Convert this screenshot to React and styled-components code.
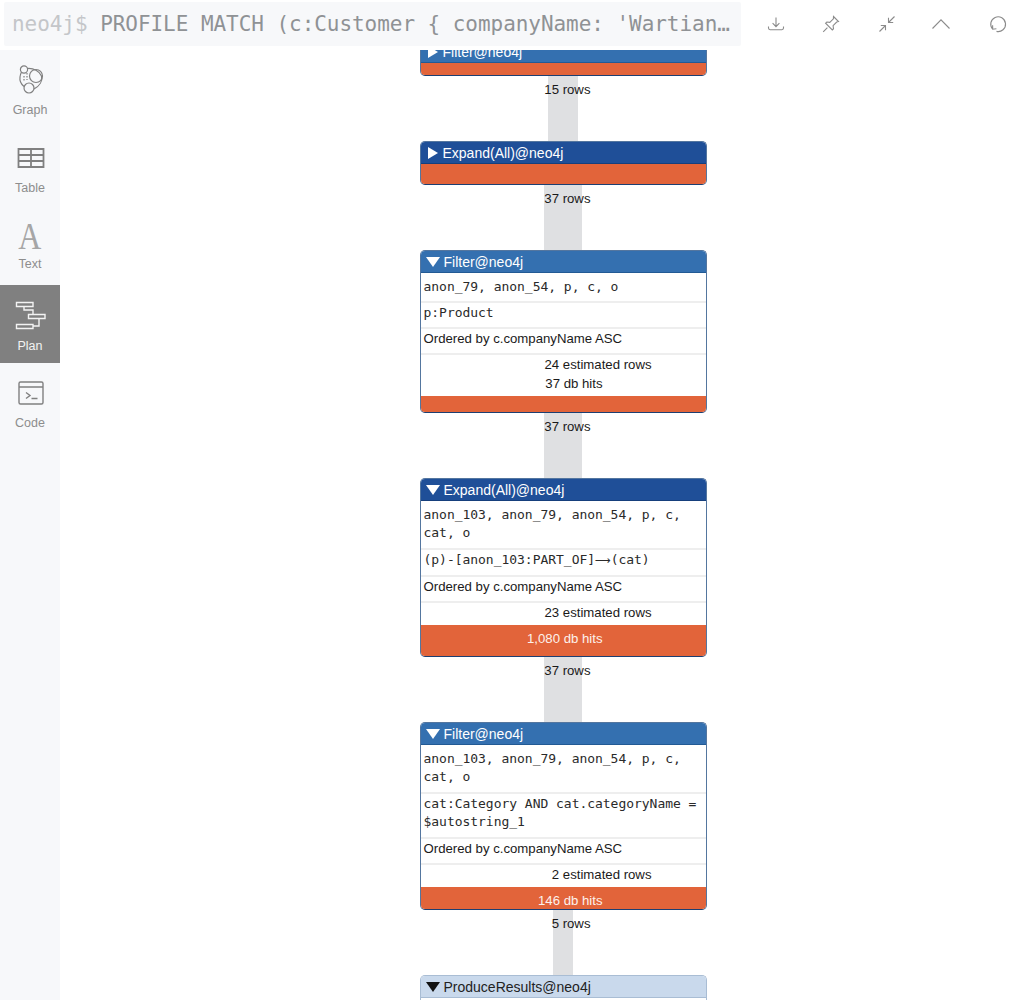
import React from 'react';
import styled, {createGlobalStyle} from 'styled-components';

const GlobalStyle = createGlobalStyle`
  html, body {
    margin: 0;
    padding: 0;
    height: 100%;
    background: #fff;
    overflow: hidden;
  }
  #root {
    height: 100%;
  }
`;

const Page = styled.div`
  display: flex;
  flex-direction: column;
  height: 1000px;
  font-family: "Liberation Sans", Arial, sans-serif;
`;

const TopBar = styled.div`
  display: flex;
  height: 50px;
  flex-shrink: 0;
  padding: 2px 0 4px 4px;
  box-sizing: border-box;
`;

const Editor = styled.div`
  width: 737px;
  flex-shrink: 0;
  box-sizing: border-box;
  padding-left: 8px;
  background: #f7f8fa;
  border-radius: 2px;
  font-family: "DejaVu Sans Mono", "Liberation Mono", monospace;
  font-size: 21px;
  line-height: 44px;
  letter-spacing: -0.05px;
  color: #8f9295;
  white-space: nowrap;
`;

const Prompt = styled.span`
  color: #c4c6c9;
`;

const Toolbar = styled.div`
  display: flex;
  flex: 1;
  padding-left: 7px;
  align-items: center;
`;

const ToolButton = styled.div`
  width: 55.4px;
  height: 40px;
  display: flex;
  align-items: center;
  justify-content: center;
`;

const ToolIcon = styled.svg`
  width: 20px;
  height: 20px;
  fill: none;
  stroke: #8b8b8b;
  stroke-width: 1.1;
`;

const Main = styled.div`
  display: flex;
  flex: 1;
  min-height: 0;
`;

const Sidebar = styled.div`
  width: 60px;
  flex-shrink: 0;
  background: #f7f8fa;
`;

const SideItem = styled.div`
  height: 78.2px;
  display: flex;
  flex-direction: column;
  align-items: center;
  box-sizing: border-box;
  padding-top: ${props => props.active ? '12px' : '14px'};
  background: ${props => props.active ? '#808080' : 'transparent'};
  color: ${props => props.active ? '#f3f3f3' : '#8d8d8d'};
`;

const SideIcon = styled.svg`
  width: 34px;
  height: 34px;
  fill: none;
  stroke: ${props => props.active ? '#f3f3f3' : '#808080'};
  stroke-width: 1.2;
`;

const SideGlyph = styled.div`
  height: 34px;
  font-family: "Liberation Serif", serif;
  font-size: 38px;
  line-height: 32px;
  color: #a6a6a6;
  transform: scaleX(0.84);
`;

const SideLabel = styled.div`
  margin-top: ${props => props.gap || 4}px;
  font-size: 12.5px;
  line-height: 16px;
`;

const Canvas = styled.div`
  flex: 1;
  overflow: hidden;
  padding-left: 359.5px;
`;

const Plan = styled.div`
  width: 287px;
  margin-top: -10px;
`;

const Node = styled.div`
  box-sizing: border-box;
  border: 1px solid ${props => props.side};
  border-bottom-color: ${props => props.bottom};
  border-radius: 5px;
  overflow: hidden;
  background: #fff;
  font-size: 13.2px;
  color: #1a1a1a;
`;

const NodeHeader = styled.div`
  display: flex;
  align-items: center;
  height: 21px;
  margin: -1px -1px 0;
  padding: 1px 0 0 6px;
  background: ${props => props.bg};
  border-bottom: 1px solid ${props => props.border};
  color: ${props => props.dark ? '#222' : '#fff'};
  font-size: 14px;
`;

const Triangle = styled.span`
  width: 0;
  height: 0;
  margin: ${props => props.open ? '0 4px 0 0' : '0 5px 0 2px'};
  ${props => props.open ? `
    border-left: 7px solid transparent;
    border-right: 7px solid transparent;
    border-top: 10px solid ${props.color};
  ` : `
    border-top: 6px solid transparent;
    border-bottom: 6px solid transparent;
    border-left: 10px solid ${props.color};
  `}
`;

const Row = styled.div`
  padding: 1px 3px ${props => props.wrapped ? 6 : 5}px;
  line-height: 18px;
  border-top: 2px solid #eeeeee;
`;

const FirstRow = styled(Row)`
  padding-top: 5px;
  border-top: 0;
`;

const Mono = styled.span`
  font-family: "DejaVu Sans Mono", "Liberation Mono", monospace;
  font-size: 13px;
  letter-spacing: -0.03px;
  color: #2a2a2a;
`;

const LongArrow = styled.span`
  display: inline-block;
  width: 15.6px;
  text-align: center;
  font-family: "DejaVu Sans", sans-serif;
  font-size: 11px;
`;

const Stats = styled.div`
  border-top: 2px solid #eeeeee;
  padding-bottom: 3px;
  text-align: right;
  line-height: 19px;
`;

const EstRows = styled.div`
  padding-right: 54px;
`;

const Hits = styled.div`
  padding-right: 103px;
`;

const OrangeBar = styled.div`
  height: ${props => props.height}px;
  box-sizing: border-box;
  padding: ${props => props.pad || 0}px 103px 0 0;
  background: #e2643a;
  color: #fdf1ec;
  text-align: right;
  line-height: 18px;
`;

const Wire = styled.div`
  position: relative;
  display: flex;
  justify-content: center;
  height: 65px;
`;

const WireBar = styled.div`
  width: ${props => props.width}px;
  background: #dfe0e2;
`;

const WireLabel = styled.div`
  position: absolute;
  top: 6px;
  right: 116px;
  font-size: 13.2px;
  line-height: 16px;
  color: #1a1a1a;
`;

const PlanNode = ({title, bg, border, side, open, dark, children}) => (
  <Node side={side} bottom={dark ? '#9fb3cb' : '#1c3f72'}>
    <NodeHeader bg={bg} border={border} dark={dark}>
      <Triangle open={open} color={dark ? '#111' : '#fff'}/>
      {title}
    </NodeHeader>
    {children}
  </Node>
);

const Edge = ({rows, width}) => (
  <Wire>
    <WireBar width={width}/>
    <WireLabel>{rows} rows</WireLabel>
  </Wire>
);

const FILTER = {bg: '#3470b0', border: '#225a94', side: '#54769f'};
const EXPAND = {bg: '#1f4f98', border: '#163f7c', side: '#54769f'};

const App = () => {
  return (
    <Page>
      <GlobalStyle/>
      <TopBar>
        <Editor>
          <Prompt>neo4j$ </Prompt>PROFILE MATCH (c:Customer {'{'} companyName: 'Wartian…
        </Editor>
        <Toolbar>
          <ToolButton>
            <ToolIcon viewBox="0 0 20 20">
              <path d="M10 3.500v9M6.600 9.200l3.400 3.400 3.400-3.400M2.500 12.500v1.600c0 1 .8 1.600 1.600 1.600h11.800c.8 0 1.600-.6 1.600-1.600v-1.600"/>
            </ToolIcon>
          </ToolButton>
          <ToolButton>
            <ToolIcon viewBox="0 0 20 20">
              <path d="M12.500 2.500l5 5-1.800.6-3.600 3.600.4 3-1.200 1.200-6.700-6.700 1.200-1.200 3 .4 3.600-3.600zM6.400 13.600L2.200 17.800"/>
            </ToolIcon>
          </ToolButton>
          <ToolButton>
            <ToolIcon viewBox="0 0 20 20">
              <path d="M18.500 2.500l-6 6M12.500 3.800v4.700h4.700M3.500 17.500l6-6M9.500 16.200v-4.700H4.800"/>
            </ToolIcon>
          </ToolButton>
          <ToolButton>
            <ToolIcon viewBox="0 0 20 20">
              <path d="M.5 14.500L9 5.800l8.500 8.700"/>
            </ToolIcon>
          </ToolButton>
          <ToolButton>
            <ToolIcon viewBox="0 0 20 20">
              <path d="M5.700 15.200A7.400 7.400 0 1 1 9.500 17.400M5.600 11.300l.1 3.900 3.700-.5"/>
            </ToolIcon>
          </ToolButton>
        </Toolbar>
      </TopBar>
      <Main>
        <Sidebar>
          <SideItem>
            <SideIcon viewBox="0 0 34 34">
              <circle cx="11" cy="5.500" r="3.600"/>
              <circle cx="23" cy="12" r="6.500"/>
              <circle cx="16" cy="24" r="5"/>
              <path d="M14.500 4.500c6-.5 12 2.500 14 7.500 1.300 5-2 10-7.500 13M11 22.500c-3-2.500-4.500-6-4-9.500.3-2.500 1-4 1.500-5"/>
              <path d="M11 12v6M14 9v7" strokeDasharray="1.500 1.500"/>
            </SideIcon>
            <SideLabel>Graph</SideLabel>
          </SideItem>
          <SideItem>
            <SideIcon viewBox="0 0 34 34">
              <path d="M5.500 7h25v18h-25zM5.500 13h25M5.500 19h25M18 7v18" strokeWidth="1.800"/>
            </SideIcon>
            <SideLabel>Table</SideLabel>
          </SideItem>
          <SideItem>
            <SideGlyph>A</SideGlyph>
            <SideLabel gap={2}>Text</SideLabel>
          </SideItem>
          <SideItem active>
            <SideIcon active viewBox="0 0 34 34">
              <path d="M3.500 5.500h16.500v4H3.500zM15.500 17.500h16.500v4H15.500zM3.500 27.500h16.500v4H3.500zM11 9.500v3.500h9v4.500M26 21.500v7.500h-6" strokeWidth="1.400"/>
            </SideIcon>
            <SideLabel gap={7}>Plan</SideLabel>
          </SideItem>
          <SideItem>
            <SideIcon viewBox="0 0 34 34">
              <path d="M7.500 5h21a1.500 1.500 0 0 1 1.500 1.500v19a1.500 1.500 0 0 1-1.500 1.500h-21a1.500 1.500 0 0 1-1.500-1.500v-19a1.500 1.500 0 0 1 1.500-1.500zM6 10h24M13 15.500l4 3-4 3M18.500 21.500h6" strokeWidth="1.400"/>
            </SideIcon>
            <SideLabel>Code</SideLabel>
          </SideItem>
        </Sidebar>
        <Canvas>
          <Plan>
            <PlanNode title="Filter@neo4j" {...FILTER}>
              <OrangeBar height={12}/>
            </PlanNode>
            <Edge rows={15} width={30}/>
            <PlanNode title="Expand(All)@neo4j" {...EXPAND}>
              <OrangeBar height={20}/>
            </PlanNode>
            <Edge rows={37} width={38}/>
            <PlanNode title="Filter@neo4j" open {...FILTER}>
              <FirstRow><Mono>anon_79, anon_54, p, c, o</Mono></FirstRow>
              <Row><Mono>p:Product</Mono></Row>
              <Row>Ordered by c.companyName ASC</Row>
              <Stats>
                <EstRows>24 estimated rows</EstRows>
                <Hits>37 db hits</Hits>
              </Stats>
              <OrangeBar height={16}/>
            </PlanNode>
            <Edge rows={37} width={38}/>
            <PlanNode title="Expand(All)@neo4j" open {...EXPAND}>
              <FirstRow wrapped><Mono>anon_103, anon_79, anon_54, p, c, cat, o</Mono></FirstRow>
              <Row><Mono>(p)-[anon_103:PART_OF]<LongArrow>⟶</LongArrow>(cat)</Mono></Row>
              <Row>Ordered by c.companyName ASC</Row>
              <Stats>
                <EstRows>23 estimated rows</EstRows>
              </Stats>
              <OrangeBar height={31} pad={5}>1,080 db hits</OrangeBar>
            </PlanNode>
            <Edge rows={37} width={38}/>
            <PlanNode title="Filter@neo4j" open {...FILTER}>
              <FirstRow wrapped><Mono>anon_103, anon_79, anon_54, p, c, cat, o</Mono></FirstRow>
              <Row wrapped><Mono>cat:Category AND cat.categoryName = $autostring_1</Mono></Row>
              <Row>Ordered by c.companyName ASC</Row>
              <Stats>
                <EstRows>2 estimated rows</EstRows>
              </Stats>
              <OrangeBar height={22} pad={5}>146 db hits</OrangeBar>
            </PlanNode>
            <Edge rows={5} width={20}/>
            <PlanNode title="ProduceResults@neo4j" open dark bg="#c9d9ec" border="#a9bdd4" side="#a9bdd4">
              <FirstRow><Mono>o, c</Mono></FirstRow>
            </PlanNode>
          </Plan>
        </Canvas>
      </Main>
    </Page>
  );
}

export default App;
